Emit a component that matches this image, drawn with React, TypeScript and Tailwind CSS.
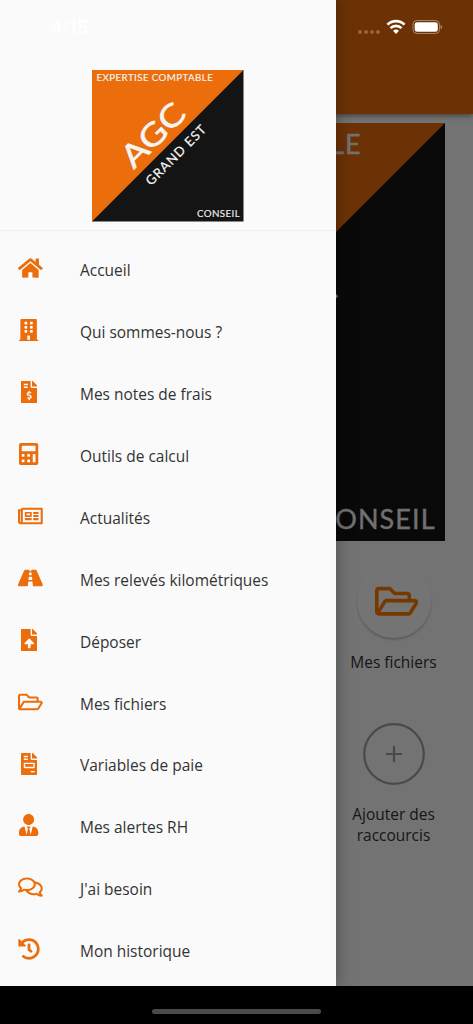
import type { ComponentType } from "react";
import {
  FaHome,
  FaBuilding,
  FaFileInvoiceDollar,
  FaRegNewspaper,
  FaRoad,
  FaFileUpload,
  FaRegFolderOpen,
  FaFileInvoice,
  FaUserTie,
  FaRegComments,
  FaHistory,
} from "react-icons/fa";

function CalculatorIcon({ className }: { className?: string }) {
  return (
    <svg viewBox="0 0 448 512" className={className} fill="currentColor">
      <path
        fillRule="evenodd"
        d="M48 0H400C426 0 448 22 448 48V464C448 490 426 512 400 512H48C22 512 0 490 0 464V48C0 22 22 0 48 0ZM77 64Q64 64 64 77V179Q64 192 77 192H371Q384 192 384 179V77Q384 64 371 64ZM77 256Q64 256 64 269V307Q64 320 77 320H115Q128 320 128 307V269Q128 256 115 256ZM205 256Q192 256 192 269V307Q192 320 205 320H243Q256 320 256 307V269Q256 256 243 256ZM77 384Q64 384 64 397V435Q64 448 77 448H115Q128 448 128 435V397Q128 384 115 384ZM205 384Q192 384 192 397V435Q192 448 205 448H243Q256 448 256 435V397Q256 384 243 384ZM333 256Q320 256 320 269V435Q320 448 333 448H371Q384 448 384 435V269Q384 256 371 256Z"
      />
    </svg>
  );
}

type MenuEntry = { label: string; Icon: ComponentType<{ className?: string }>; width: string };

const wide = "w-[24.75px]";
const square = "w-[22px]";
const medium = "w-[19.25px]";
const narrow = "w-[16.5px]";

const menu: MenuEntry[] = [
  { label: "Accueil", Icon: FaHome, width: wide },
  { label: "Qui sommes-nous ?", Icon: FaBuilding, width: medium },
  { label: "Mes notes de frais", Icon: FaFileInvoiceDollar, width: narrow },
  { label: "Outils de calcul", Icon: CalculatorIcon, width: medium },
  { label: "Actualités", Icon: FaRegNewspaper, width: wide },
  { label: "Mes relevés kilométriques", Icon: FaRoad, width: wide },
  { label: "Déposer", Icon: FaFileUpload, width: narrow },
  { label: "Mes fichiers", Icon: FaRegFolderOpen, width: wide },
  { label: "Variables de paie", Icon: FaFileInvoice, width: narrow },
  { label: "Mes alertes RH", Icon: FaUserTie, width: medium },
  { label: "J'ai besoin", Icon: FaRegComments, width: wide },
  { label: "Mon historique", Icon: FaHistory, width: square },
];

function Logo({ className }: { className: string }) {
  return (
    <svg viewBox="0 0 418 418" className={className} fill="#f4f4f4" fontFamily="Lato, sans-serif" fontWeight="400">
      <rect width="418" height="418" fill="#141414" />
      <path d="M0 0H418L0 418Z" fill="#eb6d0b" />
      <text x="12.5" y="31" fontSize="27" textLength="321" stroke="#f4f4f4" strokeWidth="0.4">EXPERTISE COMPTABLE</text>
      <text
        transform="translate(115 275.5) rotate(-45)"
        fontSize="86"
        textLength="212"
        lengthAdjust="spacingAndGlyphs"
        stroke="#f4f4f4"
        strokeWidth="1.6"
      >
        AGC
      </text>
      <text transform="translate(163 321) rotate(-45)" fontSize="36" textLength="218" stroke="#f4f4f4" strokeWidth="0.5">
        GRAND EST
      </text>
      <text x="289.5" y="405.6" fontSize="27" textLength="118" stroke="#f4f4f4" strokeWidth="0.3">CONSEIL</text>
    </svg>
  );
}

function StatusBar() {
  return (
    <div className="absolute inset-x-0 top-0 flex h-[54px] items-center justify-between pl-[50px] pr-[31px] text-white">
      <span className="font-['Inter',sans-serif] text-[19px] font-semibold leading-none">4:15</span>
      <svg width="84" height="16" viewBox="0 0 84 16" fill="currentColor">
        <g opacity="0.25">
          <circle cx="2" cy="13" r="2" />
          <circle cx="8" cy="13" r="2" />
          <circle cx="14" cy="13" r="2" />
          <circle cx="20" cy="13" r="2" />
        </g>
        <g fill="none" stroke="currentColor" strokeWidth="2.6">
          <path d="M29.4 5.6a12.3 12.3 0 0 1 17.2 0" />
          <path d="M32.5 9.2a7.7 7.7 0 0 1 11 0" />
        </g>
        <path d="M38 15l-3-3.2a4.2 4.2 0 0 1 6 0z" />
        <rect x="55" y="1.5" width="26.5" height="13" rx="4" fill="none" stroke="currentColor" opacity="0.4" />
        <rect x="56.7" y="3.2" width="23.1" height="9.6" rx="2.4" />
        <path d="M82.6 5.8a2.4 2.4 0 0 1 0 4.4z" opacity="0.45" />
      </svg>
    </div>
  );
}

function HomeScreen() {
  return (
    <div className="flex h-full flex-col bg-[#fafafa]">
      <header className="h-[114px] shrink-0 bg-[#eb6d0b] shadow-[0_2px_5px_rgba(0,0,0,0.4)]" />
      <Logo className="ml-[27px] mt-[9px] size-[418px] shrink-0" />
      <div className="mr-[20.5px] flex w-[118px] flex-col items-center self-end text-center text-[15.47px] leading-[21px] text-[#333]">
        <div className="mt-[22.5px] flex size-[74px] justify-start rounded-full bg-[#fcfcfc] pl-[18px] pt-[18px] shadow-[0_2px_2px_rgba(0,0,0,0.2)]">
          <FaRegFolderOpen className="h-[38.5px] w-[43.3px] shrink-0 text-[#ff7d00]" />
        </div>
        <span className="mt-[14px]">Mes fichiers</span>
        <svg viewBox="0 0 62 62" className="mt-[50px] size-[62px]" fill="none" stroke="#a0a0a0" strokeWidth="2.2">
          <circle cx="31" cy="31" r="29.8" />
          <path d="M31 23v16M23 31h16" />
        </svg>
        <span className="mt-[19px]">
          Ajouter des
          <br />
          raccourcis
        </span>
      </div>
    </div>
  );
}

function Drawer() {
  return (
    <aside className="absolute inset-y-0 left-0 flex w-[336px] flex-col bg-[#fafafa] shadow-[0_0_16px_rgba(0,0,0,0.35)]">
      <div className="flex h-[231px] shrink-0 justify-center border-b border-[#eeeeee] pt-[70px]">
        <Logo className="size-[151.5px]" />
      </div>
      <nav className="flex flex-col pt-[9px]">
        {menu.map(({ label, Icon, width }) => (
          <a key={label} className="flex h-[61.9px] items-center pl-[18px] text-[15.47px] text-[#333]">
            <span className="mb-[5px] flex w-[62px] shrink-0">
              <span className="flex min-w-[22px] justify-center text-[#eb6d0b]">
                <Icon className={`h-[22px] shrink-0 ${width}`} />
              </span>
            </span>
            {label}
          </a>
        ))}
      </nav>
    </aside>
  );
}

export default function App() {
  return (
    <div className="relative flex h-[1024px] w-[473px] flex-col overflow-hidden bg-black font-['Open_Sans',sans-serif]">
      <main className="relative h-[986px] overflow-hidden">
        <HomeScreen />
        <div className="absolute inset-0 bg-black/54" />
        <Drawer />
      </main>
      <div className="flex flex-1 items-center justify-center pt-[13px]">
        <div className="h-[5.5px] w-[169px] rounded-full bg-[#4a4a4a]" />
      </div>
      <StatusBar />
    </div>
  );
}
